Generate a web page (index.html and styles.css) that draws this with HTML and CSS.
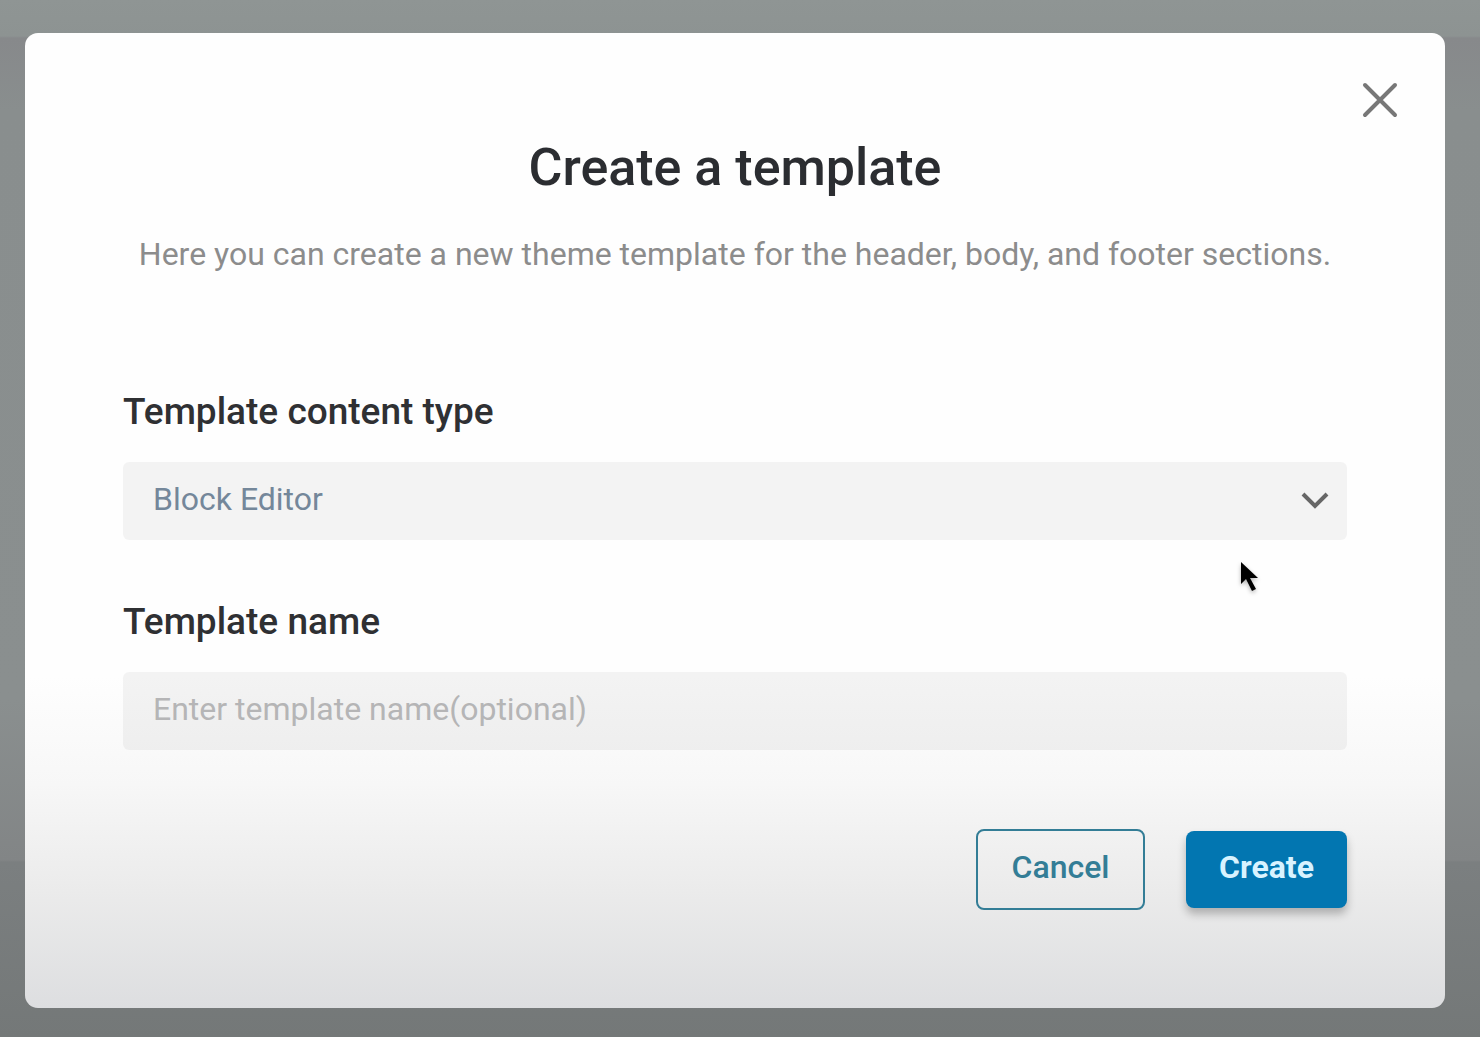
FILE: index.html
```html
<!DOCTYPE html>
<html lang="en">

<head>
    <meta charset="UTF-8">
    <meta name="viewport" content="width=device-width, initial-scale=1.0">
    <title>Create a template</title>
    <link rel="stylesheet" href="styles.css">
</head>

<body>

    <div class="overlay">
        <div class="modal" role="dialog" aria-labelledby="modalTitle">
            <button type="button" class="close-btn" aria-label="Close">
                <svg width="46" height="46" viewBox="0 0 46 46" fill="none" stroke="#777" stroke-width="4" stroke-linecap="round">
                    <path d="M8 8L38 38M38 8L8 38" />
                </svg>
            </button>

            <form class="content">
                <h2 id="modalTitle">Create a template</h2>
                <p class="description">Here you can create a new theme template for the header, body, and footer sections.</p>

                <div class="field">
                    <label for="contentType">Template content type</label>
                    <div class="select-wrap">
                        <select id="contentType">
                            <option>Block Editor</option>
                        </select>
                        <svg class="chevron" width="28" height="20" viewBox="0 0 28 20" fill="none" stroke="#666" stroke-width="4">
                            <path d="M2 3L14 15L26 3" />
                        </svg>
                    </div>
                </div>

                <div class="field">
                    <label for="templateName">Template name</label>
                    <input type="text" id="templateName" placeholder="Enter template name(optional)">
                </div>

                <div class="actions">
                    <button type="button" class="btn cancel">Cancel</button>
                    <button type="submit" class="btn create">Create</button>
                </div>
            </form>

            <svg class="pointer" width="24" height="36" viewBox="0 0 24 36">
                <path d="M3 2V24L8 19L14 31L18 29L12 18H20Z" fill="#000" />
            </svg>
        </div>
    </div>

</body>

</html>
```

FILE: styles.css
```css
* {
    box-sizing: border-box;
}

body {
    font-family: Roboto, sans-serif;
    margin: 0;
}

.overlay {
    min-height: 100vh;
    padding: 33px 35px 29px 25px;
    background: linear-gradient(#8f9594 0, #8d9392 36px, #87898b 38px, #898e8e 110px, #8a8f8f 700px, #828586 860px, #7b7f80 862px, #747878 100%);
}

.modal {
    position: relative;
    display: flex;
    flex-direction: column;
    padding: 44px 42px 98px;
    border-radius: 13px;
    background: linear-gradient(#fefefe 0, #fefefe 66%, #f7f7f7 77%, #ebebeb 88%, #dddee0 100%);
}

.close-btn {
    align-self: flex-end;
    display: flex;
    padding: 0;
    border: none;
    background: none;
    cursor: pointer;
}

.content {
    padding: 0 56px;
}

h2 {
    margin: 15px 0 36px;
    font-size: 52px;
    font-weight: 500;
    line-height: 60px;
    text-align: center;
    color: #2b2d31;
}

.description {
    margin: 0 0 118px;
    font-size: 32px;
    line-height: 40px;
    text-align: center;
    color: #8c8c8c;
}

.field {
    margin-bottom: 62px;
}

label {
    display: block;
    margin-bottom: 30px;
    font-size: 37px;
    font-weight: 500;
    line-height: 40px;
    color: #2f3033;
}

select,
input {
    display: block;
    width: 100%;
    height: 78px;
    padding: 0 30px 4px;
    border: none;
    border-radius: 6px;
    background: rgba(0, 0, 0, 0.045);
    font-family: inherit;
    font-size: 32px;
    color: #74879a;
    appearance: none;
}

input::placeholder {
    color: #b5b5b6;
    opacity: 1;
}

.select-wrap {
    position: relative;
}

.chevron {
    position: absolute;
    top: 29px;
    right: 18px;
    pointer-events: none;
}

.actions {
    display: flex;
    justify-content: flex-end;
    align-items: center;
    gap: 41px;
    margin-top: 79px;
}

.btn {
    padding: 0 32px 6px;
    border-radius: 8px;
    font-family: inherit;
    font-size: 32px;
    cursor: pointer;
}

.cancel {
    min-width: 169px;
    height: 81px;
    border: 2px solid #337d96;
    background: none;
    font-weight: 500;
    color: #337d96;
}

.create {
    min-width: 161px;
    height: 77px;
    border: none;
    background: #0276b1;
    box-shadow: 0 6px 8px rgba(0, 0, 0, 0.25);
    font-weight: 700;
    color: #d8f3ff;
}

.pointer {
    position: absolute;
    top: 527px;
    right: 183px;
    pointer-events: none;
    filter: drop-shadow(0 2px 2px rgba(0, 0, 0, 0.3));
}
```
